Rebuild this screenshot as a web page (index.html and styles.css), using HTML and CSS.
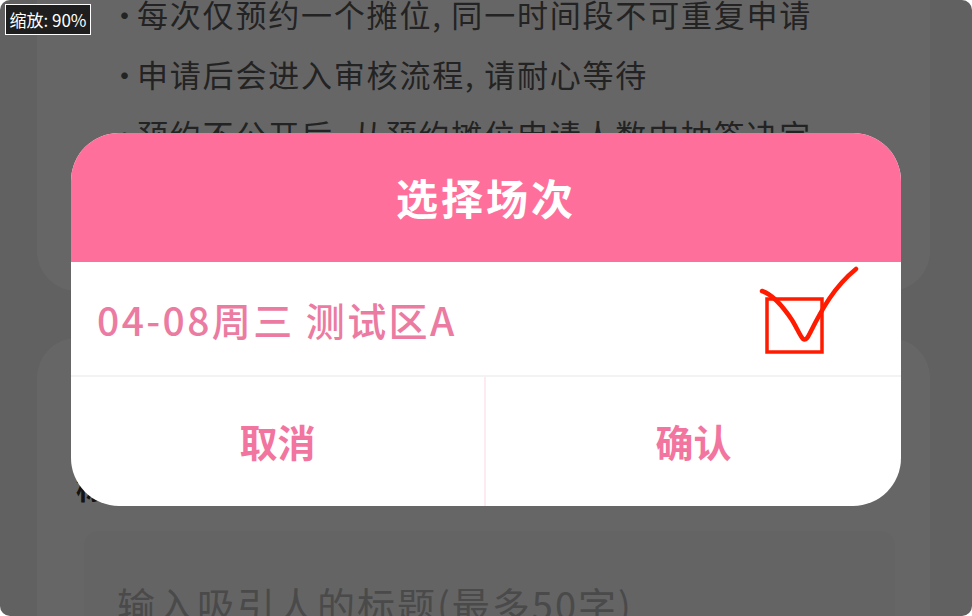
FILE: index.html
```html
<!DOCTYPE html>
<html lang="zh-CN">
<head>
<meta charset="utf-8">
<title>选择场次</title>
<link rel="stylesheet" href="styles.css">
</head>
<body>
<div class="screen">
  <div class="page">
    <section class="card card-notice">
      <p class="note"><span class="dot">·</span>每次仅预约一个摊位, 同一时间段不可重复申请</p>
      <p class="note"><span class="dot">·</span>申请后会进入审核流程, 请耐心等待</p>
      <p class="note"><span class="dot">·</span>预约不公开后, 从预约摊位申请人数中抽签决定</p>
      <p class="note"><span class="dot">·</span>抽签结果将通过消息通知</p>
    </section>
    <section class="card card-form">
      <div class="field-label">标题</div>
      <div class="field-input">输入吸引人的标题(最多50字)</div>
    </section>
  </div>

  <div class="mask"></div>

  <div class="dialog">
    <div class="dialog-head">选择场次</div>
    <div class="dialog-option">04-08周三 测试区A</div>
    <div class="dialog-actions">
      <div class="btn">取消</div>
      <div class="btn btn-confirm">确认</div>
    </div>
  </div>

  <svg class="annot" width="972" height="616" viewBox="0 0 972 616">
    <rect x="767" y="299" width="55" height="53" fill="none" stroke="#ff1a00" stroke-width="3.5"/>
    <path d="M762 291 C774 295 784 308 792 320 C797 328 800 336 803 339 C806 341 808 337 810 333 C822 309 834 287 856 269" fill="none" stroke="#ff1a00" stroke-width="4.5" stroke-linecap="round" stroke-linejoin="round"/>
  </svg>

  <div class="zoom-badge">缩放: 90%</div>
</div>
</body>
</html>
```

FILE: styles.css
```css
* { box-sizing: border-box; }

html, body {
  margin: 0;
  padding: 0;
  background: #ffffff;
}

body {
  font-family: "Noto Sans CJK SC", "Noto Sans", sans-serif;
  width: 972px;
  height: 616px;
  overflow: hidden;
}

.screen {
  position: relative;
  width: 972px;
  height: 616px;
  border-radius: 10px;
  overflow: hidden;
  background: #f2f2f2;
}

.page {
  display: flex;
  flex-direction: column;
  gap: 47px;
  padding: 0 42px 0 37px;
}

.card {
  background: #ffffff;
}

.card-notice {
  height: 291px;
  border-radius: 0 0 40px 40px;
  padding: 0 0 0 72px;
  display: flex;
  flex-direction: column;
  gap: 32px;
}

.note {
  margin: 0;
  font-size: 31px;
  line-height: 28px;
  letter-spacing: 1.8px;
  color: #585858;
  white-space: nowrap;
}

.dot {
  display: inline-block;
  width: 28px;
  letter-spacing: 0;
}

.card-form {
  height: 320px;
  border-radius: 40px 40px 0 0;
  padding: 131px 35px 0 39px;
  display: flex;
  flex-direction: column;
  gap: 28px;
}

.field-label {
  font-size: 30px;
  line-height: 34px;
  font-weight: 700;
  color: #333333;
}

.field-input {
  margin-left: 8px;
  background: #fbfbfb;
  border-radius: 14px;
  height: 120px;
  padding: 51px 0 0 33px;
  font-size: 38px;
  line-height: 44px;
  letter-spacing: 2px;
  color: #b8b8b8;
  white-space: nowrap;
}

.mask {
  position: absolute;
  inset: 0;
  background: rgba(0, 0, 0, 0.6);
}

.dialog {
  position: absolute;
  left: 71px;
  top: 133px;
  width: 830px;
  border-radius: 48px;
  overflow: hidden;
  background: #ffffff;
  display: flex;
  flex-direction: column;
}

.dialog-head {
  height: 129px;
  background: #ff6f9c;
  color: #ffffff;
  font-size: 42px;
  font-weight: 700;
  letter-spacing: 3px;
  display: flex;
  align-items: center;
  justify-content: center;
  padding-bottom: 2px;
}

.dialog-option {
  height: 115px;
  display: flex;
  align-items: center;
  padding-left: 26px;
  font-size: 39px;
  font-weight: 500;
  letter-spacing: 2.4px;
  color: #ec7ba2;
  border-bottom: 2px solid #f3f3f5;
}

.dialog-actions {
  display: grid;
  grid-template-columns: 1fr 1fr;
  height: 129px;
}

.btn {
  display: flex;
  align-items: center;
  justify-content: center;
  padding-bottom: 2px;
  font-size: 38px;
  font-weight: 700;
  color: #f2759f;
  border-right: 2px solid #fdebf1;
}

.btn-confirm {
  border-right: none;
}

.annot {
  position: absolute;
  left: 0;
  top: 0;
  pointer-events: none;
}

.zoom-badge {
  position: absolute;
  left: 5px;
  top: 4px;
  width: 86px;
  height: 31px;
  background: #1e1e1e;
  border: 1px solid #ffffff;
  color: #ffffff;
  font-size: 17px;
  line-height: 29px;
  text-align: center;
  white-space: nowrap;
}
```
